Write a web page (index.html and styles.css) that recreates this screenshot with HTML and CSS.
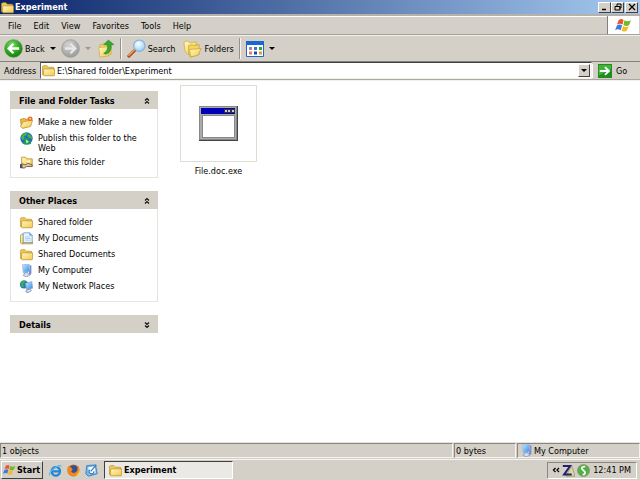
FILE: index.html
```
<!DOCTYPE html>
<html lang="en">
<head>
<meta charset="utf-8">
<title>Experiment</title>
<link rel="stylesheet" href="styles.css">
</head>
<body>
<svg class="defs" aria-hidden="true">
  <defs>
    <linearGradient id="gold" x1="0" y1="0" x2="1" y2="1"><stop offset="0" stop-color="#fffbc0"/><stop offset="1" stop-color="#f1c64f"/></linearGradient>
    <radialGradient id="green" cx=".4" cy=".3" r=".7"><stop offset="0" stop-color="#7ddc68"/><stop offset=".6" stop-color="#2fa622"/><stop offset="1" stop-color="#167d12"/></radialGradient>
    <radialGradient id="grey" cx=".4" cy=".3" r=".7"><stop offset="0" stop-color="#d4d4d4"/><stop offset="1" stop-color="#9c9c9c"/></radialGradient>
    <radialGradient id="lens" cx=".4" cy=".35" r=".6"><stop offset="0" stop-color="#fff"/><stop offset="1" stop-color="#9fd4f7"/></radialGradient>
    <linearGradient id="screen" x1="0" y1="0" x2="1" y2="1"><stop offset="0" stop-color="#c4efff"/><stop offset="1" stop-color="#2c84e8"/></linearGradient>
  </defs>
  <symbol id="folder" viewBox="0 0 16 16">
    <path d="M.5 4q0-2 2-2h3.500l2 2h5.500q1 0 1 1v8.500H2q-1.500 0-1.500-1z" fill="#f1c95b" stroke="#b98a20" stroke-width=".8"/>
    <path d="M3 6h12.500v7q0 1.500-1 1.500H3q-1 0-1-1V7q0-1 1-1z" fill="url(#gold)" stroke="#b98a20" stroke-width=".8"/>
  </symbol>
  <symbol id="newfolder" viewBox="0 0 16 16">
    <path d="M.5 4l5-1 2 1 5-1v9l-9 3-2-3z" fill="#e9b845" stroke="#b17b1c" stroke-width=".8"/>
    <path d="M4 7l11.500-2-2.500 8-9.500 2-3-2z" fill="url(#gold)" stroke="#b98a20" stroke-width=".8"/>
    <circle cx="12.500" cy="3.500" r="3" fill="#ef6a32"/><circle cx="12.500" cy="3.500" r="1.200" fill="#ffd76b"/>
  </symbol>
  <symbol id="globe" viewBox="0 0 16 16">
    <circle cx="8" cy="7.800" r="7.600" fill="#2868c4"/>
    <path d="M2 4q3-4 7-3l-1 3-3 1 1 3-3 2q-2-2-1-6zM10 2q5 2 5 7l-4-2-2-2z" fill="#3fb83f"/>
    <path d="M3 14l4-6h3l4 6-3 1.500H6z" fill="#1d9a4d"/><path d="M7 9l1 5 3-2z" fill="#b9efc6"/>
  </symbol>
  <symbol id="share" viewBox="0 0 16 16">
    <path d="M2 1.500h5l1 2h7v9H2z" fill="url(#gold)" stroke="#b98a20"/>
    <path d="M1 11q2-3 5 0l4-2 5 2v2H8l-3 2-4-1z" fill="#efc38e" stroke="#59513e"/>
    <path d="M0 10h3v5H0z" fill="#3f5272"/><path d="M8 7l4-2v3z" fill="#fff"/>
  </symbol>
  <symbol id="docs" viewBox="0 0 16 16">
    <path d="M.5 4l3.500-2v12.500H2l-1.500-1zM4 12h11.500v2.500H4z" fill="url(#gold)" stroke="#c08e21"/>
    <path d="M4.500 1H12l3 3v9H4V2z" fill="#e8f5ff" stroke="#6c9ac4"/>
    <path d="M12 1v3h3" fill="#9cc6ea" stroke="#6c9ac4"/><path d="M6 6h6M6 8h7M6 10h7" stroke="#a1c9ea"/>
  </symbol>
  <symbol id="computer" viewBox="0 0 16 16">
    <path d="M3 1l8-1 1 9-8 2z" fill="url(#screen)" stroke="#a4b8dc"/>
    <path d="M12 1l2 1v10l-3 2V9l1-1z" fill="#7391cb"/>
    <path d="M6 11l3-1 1 2 3 1-5 3-4-2z" fill="#d5dced" stroke="#8493b7"/>
  </symbol>
  <symbol id="network" viewBox="0 0 16 16">
    <circle cx="5" cy="5.500" r="5" fill="#2879bb"/><path d="M1 3q3-4 6-2L4 5l1 3-3 1zM6 3l3 2-2 3z" fill="#39b347"/>
    <path d="M7 4l7.500-2 1 8L8 12z" fill="url(#screen)" stroke="#8da3d1"/>
    <path d="M9 12l3-1 2 2-4 2.500-3-1z" fill="#dde3f3" stroke="#7080a9"/>
  </symbol>
  <symbol id="flag" viewBox="0 0 18 16">
    <path d="M4 2q3-2 5 0L8 7Q5 5 2 7z" fill="#ed552b"/><path d="M10 2.500q3 2 7 0l-2 5q-3 2-6 0z" fill="#75b82c"/>
    <path d="M2 8q3-2 5.500 0l-1.500 5q-3-2-6 0z" fill="#4179df"/><path d="M8.500 8.500q3 2 6 0l-2 5q-3 2-5.500 0z" fill="#f5bd25"/>
  </symbol>
  <symbol id="chevrons" viewBox="0 0 8 8"><path d="M2 3.500L4 1.500l2 2M2 6.500l2-2 2 2" fill="none" stroke="#111" stroke-width="1.200"/></symbol>
</svg>

<header class="window">
  <div class="titlebar">
    <svg class="icon-s"><use href="#folder"/></svg>
    <h1>Experiment</h1>
    <div class="captions">
      <button class="cap" aria-label="Minimize"><svg viewBox="0 0 10 8"><path d="M2 6.500h4" stroke="#000" stroke-width="1.500"/></svg></button>
      <button class="cap" aria-label="Restore"><svg viewBox="0 0 10 8"><path d="M4 3V1h4v4H6M3 3.500h4V7H2V3.500z" fill="none" stroke="#000"/></svg></button>
      <button class="cap cap-close" aria-label="Close"><svg viewBox="0 0 10 8"><path d="M2 1l6 6M8 1L2 7" stroke="#000" stroke-width="1.300"/></svg></button>
    </div>
  </div>
  <div class="menurow">
    <nav class="menu">
      <button>File</button><button>Edit</button><button>View</button><button>Favorites</button><button>Tools</button><button>Help</button>
    </nav>
    <div class="brand"><svg viewBox="0 0 18 16"><use href="#flag"/></svg></div>
  </div>
  <div class="toolbar">
    <button class="tool"><svg class="icon-l" viewBox="0 0 20 20"><circle cx="10" cy="10" r="9.300" fill="url(#green)" stroke="#4f9a47" stroke-width=".7"/><path d="M16 10H5M10 5l-5 5 5 5" fill="none" stroke="#fff" stroke-width="2.600"/></svg>Back</button>
    <button class="drop" aria-label="Back history"><i class="arrow"></i></button>
    <button class="tool" aria-label="Forward"><svg class="icon-l" viewBox="0 0 20 20"><circle cx="10" cy="10" r="9.300" fill="url(#grey)" stroke="#929292" stroke-width=".7"/><path d="M4 10h11M10 5l5 5-5 5" fill="none" stroke="#e8e8e8" stroke-width="2.400"/></svg></button>
    <button class="drop" aria-label="Forward history"><i class="arrow arrow-off"></i></button>
    <button class="tool" aria-label="Up"><svg class="icon-l" viewBox="0 0 20 20"><path d="M4 6l5-1 2 2 5 0v9l-8 2-4-2z" fill="#f1cf64" stroke="#c99f32" stroke-width=".6"/><path d="M3 9l12-1-2 10-9 1z" fill="url(#gold)" stroke="#c99f32" stroke-width=".6"/><path d="M8 15q5-2 4-9H8l5-5 6 5h-3q1 8-6 10z" fill="#37a82e" stroke="#217d1d" stroke-width=".5"/></svg></button>
    <span class="rule"></span>
    <button class="tool"><svg class="icon-l" viewBox="0 0 20 20"><path d="M2 18l6-6" stroke="#a75327" stroke-width="3.400" stroke-linecap="round"/><path d="M2 17l6-6" stroke="#f2a661" stroke-width="1.500" stroke-linecap="round"/><circle cx="13" cy="7" r="6" fill="url(#lens)" stroke="#83aee0" stroke-width="1.200"/></svg>Search</button>
    <button class="tool tool-folders"><svg class="icon-l" viewBox="0 0 20 20"><path d="M1 3l4-1 2 2 7-1v11l-9 2-3-3z" fill="url(#gold)" stroke="#cda437" stroke-width=".7"/><path d="M6 7l4-1 1 1 6-1v10l-9 3-2-3z" fill="#f6d65d" stroke="#c59a2b" stroke-width=".7"/><path d="M7 11l12-1-3 7-8 2z" fill="url(#gold)" stroke="#c59a2b" stroke-width=".7"/></svg>Folders</button>
    <span class="rule"></span>
    <button class="tool" aria-label="Views"><svg class="icon-v" viewBox="0 0 18 16"><path d="M.5.5h17v15H.5z" fill="#fff" stroke="#1c68cc"/><path d="M0 0h18v4H0z" fill="#1768d4"/><path d="M3 6h3v3H3z" fill="#a97bb9"/><path d="M8 6h3v3H8z" fill="#4476c7"/><path d="M13 6h3v3h-3z" fill="#36a340"/><path d="M3 10.500h3v3H3z" fill="#ef7959"/><path d="M8 10.500h3v3H8z" fill="#1749ad"/><path d="M13 10.500h3v3h-3z" fill="#d2a23a"/></svg></button>
    <button class="drop" aria-label="View options"><i class="arrow"></i></button>
  </div>
  <form class="address">
    <label for="path">Address</label>
    <div class="field">
      <svg class="icon-s"><use href="#folder"/></svg>
      <input id="path" type="text" value="E:\Shared folder\Experiment">
      <button type="button" class="expand" aria-label="Recent addresses"><i class="arrow"></i></button>
    </div>
    <button type="button" class="go"><svg viewBox="0 0 16 16"><path d="M0 0h16v16H0z" fill="#218d20"/><path d="M1 1h14v5L1 13z" fill="#45b13d"/><path d="M2 8h10M8 3.500L12.500 8 8 12.500" fill="none" stroke="#fff" stroke-width="2.200"/></svg>Go</button>
  </form>
</header>

<main class="content">
  <aside class="side">
    <section class="panel">
      <h2>File and Folder Tasks<svg><use href="#chevrons"/></svg></h2>
      <ul>
        <li><svg><use href="#newfolder"/></svg><a href="#">Make a new folder</a></li>
        <li><svg><use href="#globe"/></svg><a href="#">Publish this folder to the Web</a></li>
        <li><svg><use href="#share"/></svg><a href="#">Share this folder</a></li>
      </ul>
    </section>
    <section class="panel">
      <h2>Other Places<svg><use href="#chevrons"/></svg></h2>
      <ul>
        <li><svg><use href="#folder"/></svg><a href="#">Shared folder</a></li>
        <li><svg><use href="#docs"/></svg><a href="#">My Documents</a></li>
        <li><svg><use href="#folder"/></svg><a href="#">Shared Documents</a></li>
        <li><svg><use href="#computer"/></svg><a href="#">My Computer</a></li>
        <li><svg><use href="#network"/></svg><a href="#">My Network Places</a></li>
      </ul>
    </section>
    <section class="panel">
      <h2>Details<svg class="down"><use href="#chevrons"/></svg></h2>
    </section>
  </aside>
  <div class="files">
    <figure class="file">
      <div class="thumb"><svg viewBox="0 0 39 35"><path d="M0 0h39v35H0z" fill="#444"/><path d="M0 0h38v34H0z" fill="#888"/><path d="M1 1h36v32H1z" fill="#aaa"/><path d="M2 2h34v6H2z" fill="#0000b8"/><path d="M25 3h11v4H25z" fill="#333"/><path d="M26 4h2v2h-2zM29 4h2v2h-2zM33 4h2v2h-2z" fill="#ccc"/><path d="M3 9h33v23H3z" fill="#888"/><path d="M4 10h31v21H4z" fill="#fff"/></svg></div>
      <figcaption>File.doc.exe</figcaption>
    </figure>
  </div>
</main>

<footer>
  <div class="status">
    <span class="cell cell-main">1 objects</span><span class="cell cell-size">0 bytes</span><span class="cell cell-zone"><svg class="icon-s"><use href="#computer"/></svg>My Computer</span>
  </div>
  <div class="taskbar">
    <button class="start"><svg viewBox="0 0 18 16"><use href="#flag"/></svg>Start</button>
    <div class="quick">
      <button aria-label="Internet Explorer"><svg viewBox="0 0 16 16"><path d="M13.500 10.500A5.300 5.300 0 1 1 13.500 7.500V9H3" fill="none" stroke="#2386d8" stroke-width="2.700"/><path d="M1 14Q-1 11 7 5q7-5 8-2" fill="none" stroke="#58b7ee" stroke-width="1.500"/></svg></button>
      <button aria-label="Firefox"><svg viewBox="0 0 16 16"><circle cx="8" cy="8" r="7.500" fill="#e66b12"/><circle cx="8" cy="6.500" r="5" fill="#28549c"/><path d="M1 3l4 1 2 3-2 2q3 4 7 0 2-2 1-6 3 4 1 9-3 4-8 3-7-2-5-12z" fill="#f2871c"/><path d="M14 5q2 7-4 9 4 0 6-4z" fill="#ffd13b"/></svg></button>
      <button aria-label="Show Desktop"><svg viewBox="0 0 16 16"><path d="M2 2l11-1 2 11-11 3-3-3z" fill="#71b5ec" stroke="#347abb"/><path d="M4 4l8-1 1 8-8 2z" fill="#fff"/><path d="M6 7a3 3 0 1 0 5 2M7 9l7-8" fill="none" stroke="#347abb" stroke-width="1.500"/></svg></button>
    </div>
    <button class="task"><svg class="icon-s"><use href="#folder"/></svg>Experiment</button>
    <div class="tray">
      <button aria-label="Show hidden icons"><svg class="more" viewBox="0 0 8 8"><path d="M3.500 2L1.500 4l2 2M7 2L5 4l2 2" fill="none" stroke="#000" stroke-width="1.300"/></svg></button>
      <svg class="icon-s" viewBox="0 0 16 16"><path d="M5 15l7-13 4 13z" fill="#ddd9a4" stroke="#9d9862"/><path d="M1 2.500h9L2.500 13H12" fill="none" stroke="#25216e" stroke-width="2.400"/></svg>
      <svg class="icon-s" viewBox="0 0 16 16"><circle cx="8" cy="8" r="7.500" fill="#55ae43" stroke="#8b9c87"/><path d="M10 3Q5 3 6 6l4 4q0 3-3 3" fill="none" stroke="#fff" stroke-width="2"/></svg>
      <time>12:41 PM</time>
    </div>
  </div>
</footer>
</body>
</html>
```
FILE: styles.css
```
* { box-sizing: border-box; }
body {
  margin: 0;
  min-height: 100vh;
  display: flex;
  flex-direction: column;
  background: #fff;
  color: #000;
  font: 9px/10px "DejaVu Sans Condensed", "DejaVu Sans", Tahoma, sans-serif;
}
button, input {
  font: inherit;
  color: inherit;
  border: 0;
  padding: 0;
  margin: 0;
  background: none;
}
button { display: flex; align-items: center; white-space: nowrap; }
svg { display: block; flex: none; }
.defs { position: absolute; width: 0; height: 0; }
.icon-s { width: 13px; height: 13px; }
.icon-l { width: 19px; height: 19px; }
.icon-v { width: 18px; height: 16px; }
.window { background: #d4d0c8; border-bottom: 1px solid #aaa79f; }

.titlebar {
  display: flex;
  align-items: center;
  height: 14px;
  padding: 0 2px 0 1px;
  gap: 1px;
  color: #fff;
  background: linear-gradient(90deg, #0a246a, #a6caf0);
}
h1 { margin: 0; flex: 1; font-size: 9px; font-weight: bold; }
.captions { display: flex; }
.cap {
  width: 13px;
  height: 11px;
  justify-content: center;
  background: #d4d0c8;
  border: 1px solid;
  border-color: #fff #404040 #404040 #fff;
}
.cap svg { width: 10px; height: 8px; }
.cap-close { margin-left: 1px; }

.menurow {
  display: flex;
  height: 21px;
  border-top: 2px solid #b5b2ab;
  border-bottom: 1px solid #a5a29b;
}
.menu { flex: 1; display: flex; align-items: center; gap: 12px; padding-left: 8px; border-top: 1px solid #fff; }
.brand { width: 32px; display: flex; align-items: center; justify-content: center; background: #fff; border-left: 1px solid #808080; margin-right: 1px; }
.brand svg { width: 17px; height: 15px; }

.toolbar {
  display: flex;
  align-items: center;
  height: 27px;
  padding-left: 4px;
  border-top: 1px solid #f1efea;
  border-bottom: 1px solid #85827c;
}
.tool { gap: 2px; }
.tool-folders { margin-left: 8px; }
.drop { width: 16px; height: 20px; justify-content: center; }
.arrow { border: 3px solid transparent; border-top-color: #000; border-bottom: 0; width: 0; height: 0; }
.arrow-off { border-top-color: #9a9791; }
.rule { width: 2px; height: 21px; margin: 0 5px; border-left: 1px solid #96938c; border-right: 1px solid #f6f4f0; }

.address { display: flex; align-items: center; height: 17px; padding-left: 4px; }
.address label { width: 36px; }
.field {
  flex: 1;
  display: flex;
  align-items: center;
  height: 17px;
  padding-left: 1px;
  gap: 2px;
  background: #fff;
  border: 1px solid;
  border-color: #404040 #f4f2ed #f4f2ed #606060;
}
.field input { flex: 1; min-width: 0; height: 13px; outline: 0; }
.expand {
  width: 12px;
  height: 13px;
  margin-right: 1px;
  justify-content: center;
  background: #d4d0c8;
  border: 1px solid;
  border-color: #fff #404040 #404040 #fff;
}
.go { width: 48px; padding-left: 5px; gap: 4px; border-left: 1px solid #fff; }
.go svg { width: 14px; height: 14px; }

.content { flex: 1; display: flex; gap: 22px; padding: 4px 10px; border-top: 1px solid #f1f1f1; }
.side { width: 148px; display: flex; flex-direction: column; gap: 13px; padding-top: 6px; }
.panel h2 {
  display: flex;
  align-items: center;
  justify-content: space-between;
  height: 18px;
  margin: 0;
  padding: 1px 7px 0 9px;
  background: #d4d0c8;
  font-size: 9px;
  font-weight: bold;
}
.panel h2 svg { width: 8px; height: 8px; }
.panel h2 .down { transform: scaleY(-1); }
.panel ul { list-style: none; margin: 0; padding: 6px 9px; border: 1px solid #e6e4dc; border-top: 0; }
.panel li { display: flex; gap: 5px; min-height: 16px; padding: 1px 0 2px; }
.panel li svg { width: 13px; height: 13px; }
.panel a { padding-top: 1px; color: inherit; text-decoration: none; }
.file { margin: 0; width: 77px; text-align: center; }
.thumb { display: flex; align-items: center; justify-content: center; height: 77px; border: 1px solid #dedcd3; }
.thumb svg { width: 39px; height: 35px; }
figcaption { padding-top: 4px; }

footer { background: #d4d0c8; }
.status { display: flex; gap: 1px; height: 17px; border-top: 1px solid #e6e3dd; padding-bottom: 1px; }
.cell { display: flex; align-items: center; gap: 2px; padding-left: 1px; border: 1px solid; border-color: #8a8780 #f6f4f0 #f6f4f0 #8a8780; }
.cell-main { flex: 1; }
.cell-size { width: 62px; }
.cell-zone { width: 123px; padding-left: 2px; gap: 1px; }
.taskbar { display: flex; align-items: center; height: 21px; padding: 0 3px 0 1px; border-top: 1px solid #f6f4f0; }
.start {
  width: 42px;
  height: 18px;
  gap: 1px;
  padding-left: 1px;
  font-weight: bold;
  border: 1px solid;
  border-color: #fff #404040 #404040 #fff;
}
.start svg { width: 13px; height: 12px; }
.quick { display: flex; gap: 5px; padding: 0 6px; }
.quick svg { width: 13px; height: 13px; }
.task {
  width: 129px;
  height: 18px;
  gap: 2px;
  padding-left: 4px;
  font-weight: bold;
  background: #ebe9e5;
  border: 1px solid;
  border-color: #404040 #fff #fff #404040;
}
.tray {
  display: flex;
  align-items: center;
  width: 90px;
  height: 17px;
  margin-left: auto;
  padding: 0 5px 0 4px;
  gap: 2px;
  border: 1px solid;
  border-color: #8a8780 #fff #fff #8a8780;
}
.more { width: 8px; height: 8px; }
time { margin-left: auto; white-space: nowrap; }
```
